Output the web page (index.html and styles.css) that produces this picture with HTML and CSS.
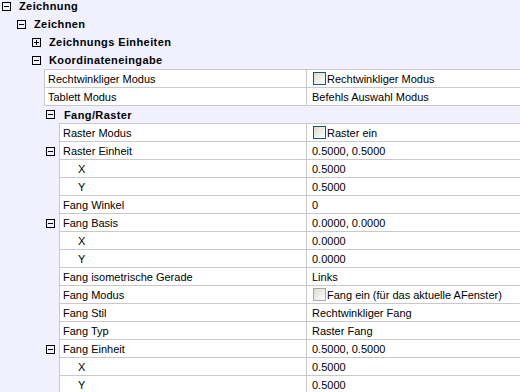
FILE: index.html
```html
<!DOCTYPE html>
<html>
<head>
<meta charset="utf-8">
<link rel="stylesheet" href="styles.css">
</head>
<body>
<div class="tree">
  <div class="cat l0"><span class="exp"></span>Zeichnung</div>
  <div class="cat l1"><span class="exp"></span>Zeichnen</div>
  <div class="cat l2"><span class="exp plus"></span>Zeichnungs Einheiten</div>
  <div class="cat l2"><span class="exp"></span>Koordinateneingabe</div>

  <div class="grid g1">
    <div class="row first"><div class="gutter"></div><div class="name">Rechtwinkliger Modus</div><div class="value"><span class="cb"></span>Rechtwinkliger Modus</div></div>
    <div class="row"><div class="gutter"></div><div class="name">Tablett Modus</div><div class="value">Befehls Auswahl Modus</div></div>
  </div>

  <div class="cat l3"><span class="exp"></span>Fang/Raster</div>

  <div class="grid g2">
    <div class="row first"><div class="gutter"></div><div class="name">Raster Modus</div><div class="value"><span class="cb"></span>Raster ein</div></div>
    <div class="row"><div class="gutter"><span class="exp"></span></div><div class="name">Raster Einheit</div><div class="value">0.5000, 0.5000</div></div>
    <div class="row"><div class="gutter"></div><div class="name sub">X</div><div class="value">0.5000</div></div>
    <div class="row"><div class="gutter"></div><div class="name sub">Y</div><div class="value">0.5000</div></div>
    <div class="row"><div class="gutter"></div><div class="name">Fang Winkel</div><div class="value">0</div></div>
    <div class="row"><div class="gutter"><span class="exp"></span></div><div class="name">Fang Basis</div><div class="value">0.0000, 0.0000</div></div>
    <div class="row"><div class="gutter"></div><div class="name sub">X</div><div class="value">0.0000</div></div>
    <div class="row"><div class="gutter"></div><div class="name sub">Y</div><div class="value">0.0000</div></div>
    <div class="row"><div class="gutter"></div><div class="name">Fang isometrische Gerade</div><div class="value">Links</div></div>
    <div class="row"><div class="gutter"></div><div class="name">Fang Modus</div><div class="value"><span class="cb light"></span>Fang ein (für das aktuelle AFenster)</div></div>
    <div class="row"><div class="gutter"></div><div class="name">Fang Stil</div><div class="value">Rechtwinkliger Fang</div></div>
    <div class="row"><div class="gutter"></div><div class="name">Fang Typ</div><div class="value">Raster Fang</div></div>
    <div class="row"><div class="gutter"><span class="exp"></span></div><div class="name">Fang Einheit</div><div class="value">0.5000, 0.5000</div></div>
    <div class="row"><div class="gutter"></div><div class="name sub">X</div><div class="value">0.5000</div></div>
    <div class="row"><div class="gutter"></div><div class="name sub">Y</div><div class="value">0.5000</div></div>
  </div>
</div>
</body>
</html>
```
FILE: styles.css
```css
* { box-sizing: border-box; }
html, body { margin: 0; padding: 0; }
body {
  background: #f0f0fe;
  font-family: "Liberation Sans", Arial, sans-serif;
  font-size: 11px;
  color: #000;
  overflow: hidden;
}
.tree { margin-top: -3px; }
.cat {
  height: 18px;
  display: flex;
  align-items: center;
  font-weight: bold;
  letter-spacing: 0.4px;
  white-space: nowrap;
}
.cat .exp { margin-right: 8px; }
.l0 { padding-left: 2px; }
.l1 { padding-left: 17px; }
.l2 { padding-left: 32px; }
.l3 { padding-left: 46px; height: 17px; }
.l3 .exp { margin-right: 9px; }

.exp {
  flex: none;
  display: inline-block;
  position: relative;
  width: 9px;
  height: 9px;
  border: 1px solid #000;
}
.exp::before {
  content: "";
  position: absolute;
  left: 1px;
  top: 3px;
  width: 5px;
  height: 1px;
  background: #000;
}
.exp.plus::after {
  content: "";
  position: absolute;
  left: 3px;
  top: 1px;
  width: 1px;
  height: 5px;
  background: #000;
}

.row {
  display: flex;
  height: 18px;
}
.row.first { height: 19px; }
.gutter {
  flex: none;
  display: flex;
  align-items: center;
}
.g1 .gutter { width: 44px; }
.g2 .gutter { width: 59px; padding-left: 46px; }
.name, .value {
  display: flex;
  align-items: center;
  background: #fff;
  border-bottom: 1px solid #c9c9c9;
  white-space: nowrap;
}
.first .name, .first .value { border-top: 1px solid #c9c9c9; }
.name {
  flex: 1;
  border-left: 1px solid #c9c9c9;
  border-right: 1px solid #c9c9c9;
  padding-left: 3px;
}
.name.sub { padding-left: 18px; }
.value {
  flex: none;
  width: 213px;
  padding-left: 5px;
}
.cb {
  flex: none;
  width: 13px;
  height: 13px;
  margin-left: 1px;
  margin-right: 1px;
  border: 1px solid #1c5180;
  background: linear-gradient(135deg, #dcdcd4 0%, #f4f4f0 70%, #fff 100%);
}
.cb.light { border-color: #a6a6a6; }
```
